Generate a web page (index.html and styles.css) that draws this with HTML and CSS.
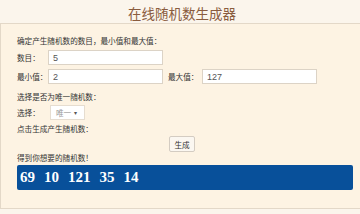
FILE: index.html
```html
<!doctype html>
<html lang="zh-CN">
<head>
  <meta charset="utf-8">
  <title>在线随机数生成器</title>
  <link rel="stylesheet" href="styles.css">
</head>
<body>
  <header class="top">
    <h1>在线随机数生成器</h1>
  </header>
  <main class="panel">
    <p class="line first">确定产生随机数的数目，最小值和最大值：</p>
    <div class="row">
      <label class="lbl">数目：</label>
      <input class="field" type="text" value="5">
    </div>
    <div class="row row2">
      <label class="lbl">最小值：</label>
      <input class="field" type="text" value="2">
      <label class="lbl lbl-max">最大值：</label>
      <input class="field" type="text" value="127">
    </div>
    <p class="line gap7">选择是否为唯一随机数：</p>
    <div class="row row-sel">
      <label class="lbl lbl-sel">选择：</label>
      <div class="select">唯一 <span class="arrow">▾</span></div>
    </div>
    <p class="line gap3">点击生成产生随机数：</p>
    <div class="btn-row">
      <button class="btn">生成</button>
    </div>
    <p class="line">得到你想要的随机数！</p>
    <div class="result">
      <span>69</span><span>10</span><span>121</span><span>35</span><span>14</span>
    </div>
  </main>
</body>
</html>
```

FILE: styles.css
```css
/* Page */
* { box-sizing: border-box; margin: 0; padding: 0; }
body {
  width: 360px;
  height: 214px;
  overflow: hidden;
  background: #fbf5ec;
  font-family: "Noto Sans CJK SC", "Noto Sans", sans-serif;
  color: #333;
}
.top {
  height: 23px;
  display: flex;
  justify-content: center;
  align-items: center;
  padding-left: 4px;
}
.top h1 {
  font-size: 13.5px;
  font-weight: normal;
  color: #8a5c3e;
  line-height: 1;
  margin-top: 4px;
}
/* Main panel */
.panel {
  background: #fdf3e3;
  border: 1px solid #e3d8c8;
  border-right: none;
  height: 186px;
  padding: 11px 7px 0 16px;
  display: flex;
  flex-direction: column;
  font-size: 7.6px;
}
.line {
  height: 12px;
  line-height: 12px;
  white-space: nowrap;
}
.gap7 { margin-top: 7px; }
.gap3 { margin-top: 3px; }
.row {
  display: flex;
  align-items: center;
  height: 15px;
  margin-top: 3px;
}
.row2 { margin-top: 4px; }
.lbl {
  width: 31px;
  white-space: nowrap;
}
.lbl-max {
  width: 34px;
  margin-left: 5px;
}
.field {
  width: 115px;
  height: 15px;
  border: 1px solid #dcd3c6;
  background: #fff;
  font-family: "Liberation Sans", sans-serif;
  font-size: 9px;
  color: #555;
  padding-left: 4px;
  outline: none;
}
/* Select */
.row-sel { margin-top: 2px; }
.lbl-sel { width: 33px; }
.select {
  width: 35px;
  height: 15px;
  background: #fff;
  border: 1px solid #e6ddd0;
  color: #999;
  display: flex;
  align-items: center;
  padding-left: 5px;
  gap: 3px;
}
.arrow {
  font-size: 6px;
  color: #555;
}
/* Button */
.btn-row {
  display: flex;
  justify-content: center;
  margin-top: 1px;
  height: 16px;
}
.btn {
  width: 26px;
  height: 16px;
  background: #fbf7f1;
  border: 1px solid #d4ccc2;
  border-radius: 2px;
  font-family: "Noto Sans CJK SC", sans-serif;
  font-size: 7.6px;
  color: #333;
  margin-right: 6px;
}
/* Result */
.result {
  margin-top: 1px;
  height: 25px;
  background: #08509a;
  border-radius: 2px;
  display: flex;
  align-items: center;
  gap: 9px;
  padding-left: 3px;
  font-family: "Liberation Serif", serif;
  font-weight: bold;
  font-size: 15px;
  color: #fff;
}
```
